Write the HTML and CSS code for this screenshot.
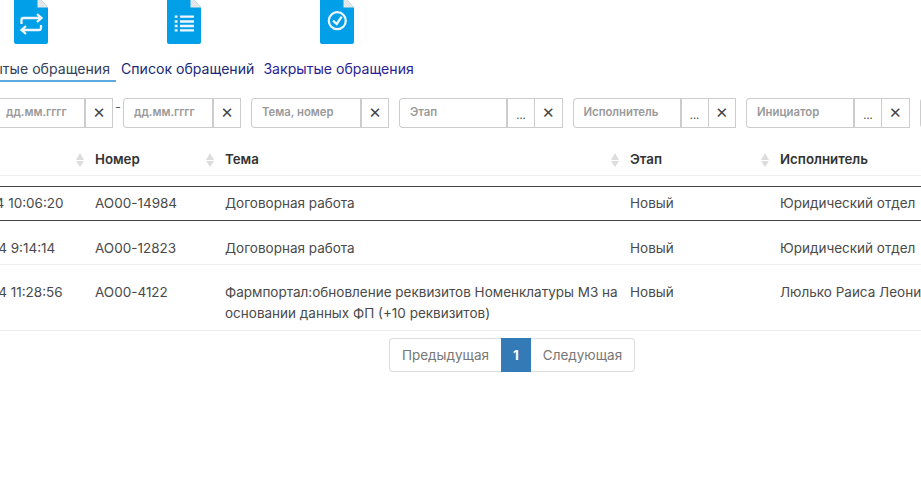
FILE: index.html
```html
<!DOCTYPE html>
<html lang="ru">
<head>
<meta charset="utf-8">
<title>Обращения</title>
<link rel="stylesheet" href="styles.css">
</head>
<body>
<main class="page">
  <section class="icons">
    <a class="doc">
      <svg width="34" height="44" viewBox="0 0 34 44"><path class="doc-body" d="M0 0H27L34 7.500V42a2 2 0 0 1-2 2H2a2 2 0 0 1-2-2V0Z"/><path class="doc-fold" d="M23.500 0H27L34 7.500H23.500Z"/><path class="doc-line" d="M7.500 24V20a2 2 0 0 1 2-2H27M23 14L27.500 18L23 22M27 25V28a2 2 0 0 1-2 2H8M12 26L7.500 30L12 34"/></svg>
    </a>
    <a class="doc">
      <svg width="34" height="44" viewBox="0 0 34 44"><path class="doc-body" d="M0 0H27L34 7.500V42a2 2 0 0 1-2 2H2a2 2 0 0 1-2-2V0Z"/><path class="doc-fold" d="M23.500 0H27L34 7.500H23.500Z"/><path class="doc-line" d="M13 16.700H27M13 21.500H27M13 26H27M13 30.300H27M7.700 16.700H10.500M7.700 21.500H10.500M7.700 26H10.500M7.700 30.300H10.500"/></svg>
    </a>
    <a class="doc">
      <svg width="34" height="44" viewBox="0 0 34 44"><path class="doc-body" d="M0 0H27L34 7.500V42a2 2 0 0 1-2 2H2a2 2 0 0 1-2-2V0Z"/><path class="doc-fold" d="M23.500 0H27L34 7.500H23.500Z"/><circle class="doc-line" cx="17.300" cy="20.700" r="8.500"/><path class="doc-line" d="M13 20.700L16.700 24L21.700 16.700"/></svg>
    </a>
  </section>

  <nav class="tabs">
    <a class="tab tab-active">Открытые обращения</a>
    <a class="tab tab-list">Список обращений</a>
    <a class="tab tab-closed">Закрытые обращения</a>
  </nav>

  <section class="filters">
    <div class="field"><input class="inp w-date" placeholder="дд.мм.гггг"><button class="btn btn-x">✕</button></div>
    <span class="dash">-</span>
    <div class="field"><input class="inp w-date" placeholder="дд.мм.гггг"><button class="btn btn-x">✕</button></div>
    <div class="field"><input class="inp w-theme" placeholder="Тема, номер"><button class="btn btn-x">✕</button></div>
    <div class="field"><input class="inp w-pick" placeholder="Этап"><button class="btn btn-dots">...</button><button class="btn btn-x btn-x-wide">✕</button></div>
    <div class="field"><input class="inp w-pick" placeholder="Исполнитель"><button class="btn btn-dots">...</button><button class="btn btn-x btn-x-wide">✕</button></div>
    <div class="field"><input class="inp w-pick" placeholder="Инициатор"><button class="btn btn-dots">...</button><button class="btn btn-x btn-x-wide">✕</button></div>
    <div class="field"><input class="inp w-pick" placeholder="Статус"></div>
  </section>

  <table class="grid">
    <colgroup><col class="c-date"><col class="c-num"><col class="c-theme"><col class="c-stage"><col class="c-exec"></colgroup>
    <thead>
      <tr>
        <th><span class="sort"></span>Дата</th>
        <th><span class="sort"></span>Номер</th>
        <th><span class="sort"></span>Тема</th>
        <th><span class="sort"></span>Этап</th>
        <th><span class="sort"></span>Исполнитель</th>
      </tr>
    </thead>
    <tbody>
      <tr class="gap"><td colspan="5"></td></tr>
      <tr class="selected"><td>20.01.2024 10:06:20</td><td>АО00-14984</td><td>Договорная работа</td><td>Новый</td><td>Юридический отдел</td></tr>
      <tr class="gap"><td colspan="5"></td></tr>
      <tr class="low"><td>20.08.2024 9:14:14</td><td>АО00-12823</td><td>Договорная работа</td><td>Новый</td><td>Юридический отдел</td></tr>
      <tr class="gap gap-tall"><td colspan="5"></td></tr>
      <tr><td>20.08.2024 11:28:56</td><td>АО00-4122</td><td>Фармпортал:обновление реквизитов Номенклатуры МЗ на<br>основании данных ФП (+10 реквизитов)</td><td>Новый</td><td>Люлько Раиса Леонидовна</td></tr>
    </tbody>
  </table>

  <div class="pager">
    <a class="pg pg-prev">Предыдущая</a><a class="pg pg-cur">1</a><a class="pg pg-next">Следующая</a>
  </div>
</main>
</body>
</html>
```
FILE: styles.css
```css
html, body { margin: 0; padding: 0; background: #fff; overflow: hidden; height: 100%; }
body { font-family: Inter, "Open Sans", sans-serif; font-size: 13.5px; line-height: 21px; color: #4a4a4a; }
.page { width: 1300px; margin-left: -100px; }

.icons { display: flex; gap: 119px; padding-left: 114px; height: 44px; }
.doc { display: block; width: 34px; height: 44px; }
.doc svg { display: block; }
.doc-body { fill: #009fe8; }
.doc-fold { fill: #e6e6e6; }
.doc-line { fill: none; stroke: #eef6fb; stroke-width: 2.300; }

.tabs { display: flex; margin-top: 14px; height: 24px; margin-left: 60px; }
.tab { font-size: 14.1px; line-height: 22px; padding: 0 5px; white-space: nowrap; }
.tab-active { color: #33415c; box-sizing: border-box; flex: none; width: 156px; text-align: right; padding-right: 6px; border-bottom: 2px solid #5ea9e0; height: 24px; direction: rtl; overflow: hidden; }
.tab-list { color: #1a2a78; }
.tab-closed { color: #2a1e96; margin-left: -1px; }

.filters { display: flex; align-items: flex-start; margin-top: 16px; margin-left: 95px; height: 30px; }
.field { display: flex; flex: none; height: 30px; margin-right: 10px; }
.field:nth-child(1) { margin-right: 0; }
.dash { flex: none; width: 10px; text-align: center; line-height: 18px; font-size: 12px; color: #555; }
.inp { box-sizing: border-box; flex: none; height: 30px; padding: 0 10px 2px; border: 1px solid #ccc; border-right-width: 2px; border-radius: 4px 0 0 4px; font: 600 11.3px Inter, sans-serif; color: #444; outline: none; }
.inp::placeholder { color: #999; opacity: 1; }
.w-date { width: 91px; }
.w-theme { width: 111px; }
.w-pick { width: 109px; }
.btn { box-sizing: border-box; flex: none; height: 30px; padding: 0; background: #fff; border: 1px solid #ccc; border-left: 0; color: #444; font-family: "DejaVu Sans", sans-serif; cursor: pointer; }
.btn-x { width: 27px; font-size: 15px; }
.btn-x-wide { width: 27.500px; }
.btn-dots { width: 27px; font-size: 11px; padding-top: 4px; font-family: Inter, sans-serif; }

.grid { width: 1100px; table-layout: fixed; border-collapse: collapse; margin-top: 16px; }
.c-date { width: 180px; }
.c-num { width: 130px; }
.c-theme { width: 405px; }
.c-stage { width: 150px; }
.grid th { text-align: left; font-weight: 600; color: #333; font-size: 13.3px; padding: 5px 0 5px 15px; border-bottom: 1px solid #eee; position: relative; height: 21px; white-space: nowrap; }
.grid td { padding: 6px 15px; border-bottom: 1px solid #eee; vertical-align: top; white-space: nowrap; }
.grid td:nth-child(1) { padding-left: 33px; }
.grid tr.gap td { height: 10px; padding: 0; border-bottom: 0; }
.grid tr.gap-tall td { height: 11px; }
.grid tr.low td { padding-top: 7px; padding-bottom: 5px; }
.grid tr.selected td { border-top: 1px solid #444; border-bottom: 1px solid #444; }
.sort { position: absolute; left: -4px; top: 9px; width: 9px; height: 14px; }
.sort::before, .sort::after { content: ""; position: absolute; left: 0; border-left: 4.500px solid transparent; border-right: 4.500px solid transparent; }
.sort::before { top: 0; border-bottom: 7px solid #ddd; }
.sort::after { top: 8px; border-top: 6px solid #ddd; }

.pager { display: flex; width: 246px; height: 34px; margin: 7px 0 0 489px; }
.pg { box-sizing: border-box; height: 34px; line-height: 32px; text-align: center; border: 1px solid #ddd; color: #777; }
.pg-prev { width: 112px; border-radius: 4px 0 0 4px; border-right: 0; }
.pg-cur { width: 30px; background: #337ab7; border-color: #337ab7; color: #fff; font-weight: 700; }
.pg-next { width: 104px; border-radius: 0 4px 4px 0; border-left: 0; }
```
